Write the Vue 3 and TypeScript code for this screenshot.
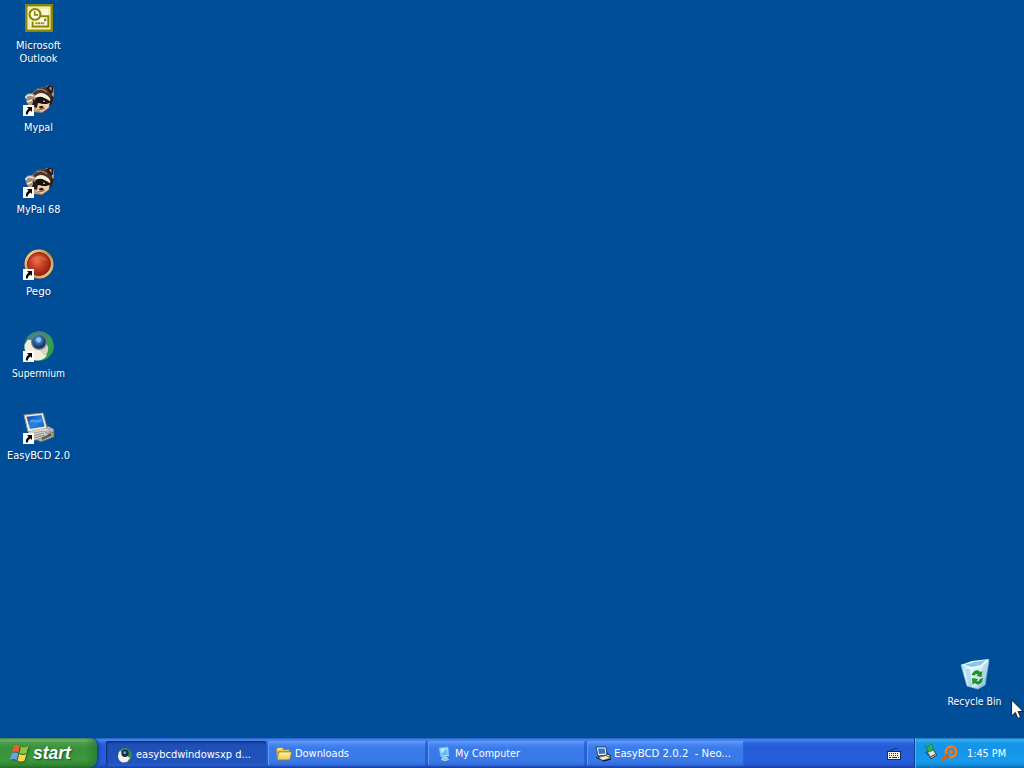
<script setup lang="ts">
interface DesktopItem {
  icon: string
  label: string[]
  width: number
  shortcut: boolean
}
interface TaskItem {
  icon: string
  label: string
  width: number
  active: boolean
}

const items: DesktopItem[] = [
  { icon: 'outlook', label: ['Microsoft', 'Outlook'], width: 45, shortcut: false },
  { icon: 'raccoon', label: ['Mypal'], width: 29, shortcut: true },
  { icon: 'raccoon', label: ['MyPal 68'], width: 44, shortcut: true },
  { icon: 'pego', label: ['Pego'], width: 25, shortcut: true },
  { icon: 'supermium', label: ['Supermium'], width: 53, shortcut: true },
  { icon: 'easybcd', label: ['EasyBCD 2.0'], width: 63, shortcut: true },
]
const lineWidths: Record<string, number> = { Microsoft: 45, Outlook: 38 }

const tasks: TaskItem[] = [
  { icon: 'supermium-small', label: 'easybcdwindowsxp d...', width: 115, active: true },
  { icon: 'folder', label: 'Downloads', width: 54, active: false },
  { icon: 'computer', label: 'My Computer', width: 65, active: false },
  { icon: 'easybcd-small', label: 'EasyBCD 2.0.2\u00a0 - Neo...', width: 117, active: false },
]
</script>

<template>
  <svg class="defs" width="0" height="0" aria-hidden="true">
    <defs>
      <linearGradient id="gFur" x1="0" y1="0" x2="1" y2="1">
        <stop offset="0" stop-color="#8d5c42" /><stop offset=".55" stop-color="#d3a27c" /><stop offset="1" stop-color="#7c4c34" />
      </linearGradient>
      <radialGradient id="gRed" cx=".42" cy=".38" r=".65">
        <stop offset="0" stop-color="#e87450" /><stop offset=".4" stop-color="#cb4426" /><stop offset="1" stop-color="#93200f" />
      </radialGradient>
      <linearGradient id="gRing" x1="0" y1="0" x2="1" y2="1">
        <stop offset="0" stop-color="#f8dca0" /><stop offset=".5" stop-color="#c08d4e" /><stop offset="1" stop-color="#ead49c" />
      </linearGradient>
      <linearGradient id="gGreen" x1="0" y1="0" x2="1" y2="1">
        <stop offset="0" stop-color="#286c68" /><stop offset=".5" stop-color="#3c9a54" /><stop offset="1" stop-color="#23a447" />
      </linearGradient>
      <radialGradient id="gLens" cx=".45" cy=".35" r=".6">
        <stop offset="0" stop-color="#9ccdf5" /><stop offset=".4" stop-color="#3977b9" /><stop offset="1" stop-color="#102c5c" />
      </radialGradient>
      <linearGradient id="gScreen" x1="0" y1="0" x2="1" y2="1">
        <stop offset="0" stop-color="#123fa5" /><stop offset=".55" stop-color="#2586e4" /><stop offset="1" stop-color="#1653bd" />
      </linearGradient>
      <linearGradient id="gBin" x1="0" y1="0" x2="1" y2=".6">
        <stop offset="0" stop-color="#8ccbee" /><stop offset=".35" stop-color="#e7faff" /><stop offset=".75" stop-color="#cfe8f0" /><stop offset="1" stop-color="#8ebbd8" />
      </linearGradient>
      <linearGradient id="gFolder" x1="0" y1="0" x2="0" y2="1">
        <stop offset="0" stop-color="#fff9a6" /><stop offset="1" stop-color="#ecc64a" />
      </linearGradient>
    </defs>
    <symbol id="outlook" viewBox="0 0 32 32">
      <rect x="2" y="2" width="28" height="28" fill="#8b8600" />
      <rect x="4.5" y="4.5" width="23" height="23" fill="#fffde9" />
      <rect x="6" y="6" width="20" height="20" fill="#fffbd0" stroke="#e3dc80" />
      <path d="M17 14.2h8.3v10.3H9.6v-5" fill="#fffdf0" stroke="#8b8600" stroke-width="2" />
      <circle cx="12" cy="12.4" r="5.4" fill="#fffdf0" stroke="#8b8600" stroke-width="2.1" />
      <path d="M11.7 9v3.9h3.5" fill="none" stroke="#8b8600" stroke-width="1.6" />
      <path d="M12.5 21.3h9" stroke="#8b8600" stroke-width="2" stroke-dasharray="2 .6" /><path d="M21 16.6h2.4v2.6H21z" fill="#8b8600" />
    </symbol>
    <symbol id="raccoon" viewBox="0 0 32 32">
      <path d="M9 9L15 4l7-1 4-2 4 1 1 8-1 8-4 6-7 5-8-1-6-7-2-7z" fill="url(#gFur)" />
      <path d="M10 9l6-5 7-1 5 4 2 8-2 6c-3-6-8-9-15-8z" fill="#4b342b" />
      <path d="M23 4l3-3 4 1v6l-2 2z" fill="#241a17" /><path d="M26 4l2.5-1.5V7z" fill="#c49a74" />
      <path d="M14 6c4-2 7-1 10 2" fill="none" stroke="#a78267" stroke-width="1.2" />
      <path d="M11 13c4-5 9-5 14-1l4 5-3 1-6-4z" fill="#f9efe0" />
      <path d="M12 15c4-4 9-2 16 3l-2 4-6-1-7-2z" fill="#14110f" />
      <path d="M15 19c5 1 9 2 13-1l-3 6-6 4-6-2z" fill="#f1cfac" />
      <path d="M28 12l3 1-2 7-3 3z" fill="#2c1d18" />
      <path d="M10 15l5 3-1 6-5-2z" fill="#241c1a" />
      <path d="M16 22.5l3-.7 2 1.2-2 1.8-2.6-.5z" fill="#2b1915" />
      <path d="M14 26l5-.5 3-1.5" fill="none" stroke="#915c3e" />
      <path d="M2 13c1-4 6-5 10-2l-2 3c-3-2-4-1-5 2l5-1v4H4z" fill="#9d9084" />
      <path d="M2.5 14c1-3 4-4 8-2M4 18l5-2" fill="none" stroke="#f3eadf" stroke-width="1.5" />
      <circle cx="21" cy="17.2" r=".8" fill="#fff" />
    </symbol>
    <symbol id="pego" viewBox="0 0 32 32">
      <circle cx="16" cy="16" r="14.8" fill="#794334" />
      <circle cx="16" cy="16" r="13" fill="none" stroke="url(#gRing)" stroke-width="2.8" />
      <circle cx="16" cy="16" r="11.4" fill="url(#gRed)" stroke="#8a2b18" />
      <path d="M7 13c5-7 13-7 18 0-5-2-12-2-18 0z" fill="#f19875" opacity=".3" />
    </symbol>
    <symbol id="supermium" viewBox="0 0 32 32">
      <circle cx="16" cy="16" r="14.8" fill="url(#gGreen)" />
      <path d="M4 8C8 2 16 0 23 3l-5 4-6 3-4 3z" fill="#3c8783" />
      <path d="M1.5 15l3-5c4-1 7 2 10 6l8 3 1 7c-4 5-9 5-13 4C5 27 1 22 1.5 15z" fill="#f2eddf" />
      <path d="M7 11l5-5 2 11z" fill="#d4dedb" />
      <path d="M23 13c3 4 3 9-1 13l-7-7z" fill="#ded4c3" />
      <circle cx="16" cy="12" r="8" fill="#6a7f89" /><circle cx="16" cy="11.7" r="6.8" fill="url(#gLens)" />
      <circle cx="15.7" cy="10" r="2.4" fill="#8fc5ee" />
    </symbol>
    <symbol id="supermium-small" viewBox="0 0 16 16">
      <circle cx="8" cy="8" r="7" fill="#35884c" />
      <path d="M1 9l1-4 4-3 3 6 4 3-3 4-4 .5C3 15 1 12 1 9z" fill="#f4f1e8" />
      <path d="M2 4l3-2 5-1-3 4z" fill="#4b898a" /><circle cx="8" cy="6.2" r="3.7" fill="#172e51" /><circle cx="7.8" cy="5.7" r="1.4" fill="#70a7d8" />
    </symbol>
    <symbol id="easybcd" viewBox="0 0 32 32">
      <path d="M10 21l15-7 6 3v8l-13 5-9-4z" fill="#aeada0" stroke="#45545d" stroke-width=".8" />
      <path d="M13 21l13-6 4 3-11 6z" fill="#e5dfce" /><path d="M19 25l11-5v3l-11 5z" fill="#54595b" />
      <ellipse cx="24.5" cy="18.3" rx="3.7" ry="2.1" fill="#bab6d8" stroke="#777993" stroke-width=".6" />
      <path d="M28 21h2v2h-2z" fill="#c6a638" />
      <path d="M1 3L20 1l4 15L5 20z" fill="#f3eedf" stroke="#8f9490" />
      <path d="M3.5 4.7l15.1-1.6 3 11.4L7 17z" fill="url(#gScreen)" />
      <path d="M7 8c5-2 7 2 11-1l1 2c-5 3-8 0-12 2z" fill="#6bb5f2" opacity=".6" />
      <path d="M5 20l18-4 2 2-16 5z" fill="#ddd7c8" />
      <path d="M6 22l15-3 4 4-15 6z" fill="#d4d3ca" stroke="#737d80" stroke-width=".6" />
      <path d="M10 24l11-3M11 26l11-3" stroke="#727674" stroke-width=".8" />
    </symbol>
    <symbol id="easybcd-small" viewBox="0 0 16 16">
      <path d="M4 9l8-2 4 3v3l-7 2-5-2z" fill="#807f7a" stroke="#111924" stroke-width=".8" />
      <path d="M1 1h10l1 8-9 1z" fill="#fffbed" stroke="#14223c" stroke-width=".8" />
      <path d="M3 2.5h6.7l.7 5L4 8z" fill="#2477d8" />
      <path d="M4 12l7-2 3 2-6 2z" fill="#f2eee0" /><path d="M1 11l3 2M8 15l8-2" stroke="#10151d" />
      <path d="M12 9h2v1h-2z" fill="#e1c7bd" />
    </symbol>
    <symbol id="arrow" viewBox="0 0 11 11">
      <path d="M0 0h11v11H0z" fill="#fff" />
      <path d="M4 2h5v5L7.4 5.5C5.3 7 4.8 8 4.8 9.5H3C2.7 7 3.4 5.3 5.6 3.8z" fill="#000" />
    </symbol>
    <symbol id="bin" viewBox="0 0 32 32">
      <path d="M2 7L30 2l-4 25-7 4-11-3z" fill="url(#gBin)" stroke="#80bdde" stroke-width=".8" />
      <path d="M2 7l11-4 17-2-6 7-11 2z" fill="#f2ffff" />
      <path d="M5 7l10-3 12-2-5 5-9 2z" fill="#86c6e8" />
      <path d="M6 11l3 16 4 2-2-18z" fill="#8ac4e5" opacity=".5" />
      <path d="M24 7l5-3-4 21-3 2z" fill="#a8d1e5" opacity=".6" />
      <path d="M12.5 17c2-5 6-6 9-3l2-1-1 6-5-1 1.5-1.5c-1.2-1-2.7-.5-3.5 1zM24 20l-1 4c-2 3-5 3-7.5 1l-2 2-.5-7 6 1-1.5 2c1.5.7 3 0 3.3-2z" fill="#239329" />
    </symbol>
    <symbol id="folder" viewBox="0 0 16 16">
      <path d="M.5 3.5l1-2h5l1 2h6v2H.5z" fill="#f7df70" stroke="#927923" stroke-width=".7" />
      <path d="M.5 4.5h13v9H1z" fill="#dca72f" />
      <path d="M3 6h12.7l-2 8H1z" fill="url(#gFolder)" stroke="#987629" stroke-width=".7" />
    </symbol>
    <symbol id="computer" viewBox="0 0 16 16">
      <path d="M3 2l9-1 1 9-8 1z" fill="#ace4fa" stroke="#67b3ea" stroke-width=".7" />
      <path d="M4.3 3.2l6.7-.8.6 6.3-6 .7z" fill="#64b9f3" />
      <path d="M4.4 3.2l6.4-.7-5.2 5z" fill="#b7eafb" />
      <path d="M7 11h4l2 3-4 1-4-1z" fill="#c4e3e7" /><path d="M7 13h5" stroke="#6da4be" />
    </symbol>
  </svg>

  <div class="screen">
    <main class="desktop">
      <div class="column">
        <div v-for="item in items" :key="item.label.join(' ')" class="item">
          <div class="picture">
            <svg class="large"><use :href="'#' + item.icon" /></svg>
            <svg v-if="item.shortcut" class="shortcut"><use href="#arrow" /></svg>
          </div>
          <svg v-for="line in item.label" :key="line" class="line" width="76" height="13">
            <text x="38.5" y="10" text-anchor="middle" :textLength="lineWidths[line] ?? item.width" lengthAdjust="spacingAndGlyphs">{{ line }}</text>
          </svg>
        </div>
      </div>
      <div class="item recycle">
        <div class="picture"><svg class="large"><use href="#bin" /></svg></div>
        <svg class="line" width="76" height="13">
          <text x="38.5" y="10" text-anchor="middle" textLength="54" lengthAdjust="spacingAndGlyphs">Recycle Bin</text>
        </svg>
      </div>
    </main>

    <footer class="taskbar">
      <button class="start">
        <svg class="flag" viewBox="0 0 20 20">
          <path d="M3.7 2.8C6 1.1 8 1.6 10 2.8L8.5 9.5C6.5 8.3 4.5 8.1 2 9.5z" fill="#ef5c2d" />
          <path d="M11 3.4c2.5 1.4 4.7 1.2 7.4-.1L16.6 10c-2.5 1.3-4.9 1-7.1-.1z" fill="#8cc63c" />
          <path d="M1.7 10.6c2.5-1.4 4.5-1.2 6.5-.1L6.6 17.1C4.6 15.8 2.5 15.8 0 17z" fill="#65a2ef" />
          <path d="M9.2 11.1c2.2 1.1 4.7 1.3 7.1.1l-1.8 6.5c-2.4 1.2-4.7.8-6.9-.2z" fill="#ffd247" />
        </svg>
        <span>start</span>
      </button>
      <div class="tasks">
        <button v-for="task in tasks" :key="task.label" class="task" :class="{ active: task.active }">
          <svg class="small"><use :href="'#' + task.icon" /></svg>
          <svg class="caption" width="122" height="15">
            <text x="0" y="11" :textLength="task.width" lengthAdjust="spacingAndGlyphs">{{ task.label }}</text>
          </svg>
        </button>
      </div>
      <svg class="keyboard" viewBox="0 0 14 12">
        <path d="M3 3c0-2 3 0 4-2s3 0 4-1" fill="none" stroke="#193568" />
        <rect x=".5" y="3.5" width="13" height="8" fill="#f4f2e9" stroke="#172d54" />
        <path d="M2 5.5h10M2 7.5h10" stroke="#26313f" stroke-dasharray="1 1" /><path d="M2 9.5h2m1 0h5m1 0h1" stroke="#26313f" />
      </svg>
      <div class="tray">
        <svg class="device" viewBox="0 0 16 16">
          <path d="M4 8l6-3 4 6-6 4z" fill="#a9bab5" stroke="#29485e" />
          <path d="M6 9l4-2 2 3-4 2z" fill="#e9ebdf" /><path d="M7.5 13l5-3" stroke="#304a4b" />
          <path d="M1 2l4 1 3-3 2 1-1 6H3l2-2z" fill="#2bb54a" stroke="#14784b" stroke-width=".6" />
          <path d="M2 8l3 3" stroke="#254d65" />
        </svg>
        <svg class="search" viewBox="0 0 17 17">
          <circle cx="10" cy="6.8" r="5.2" fill="none" stroke="#ee7b22" stroke-width="2.8" />
          <circle cx="10" cy="6.8" r="2" fill="#ee7418" />
          <path d="M5.8 10.8L2.2 14.3" stroke="#df5e16" stroke-width="3.4" stroke-linecap="round" />
          <path d="M4.8 9l3.5 3.5" stroke="#9d4c24" />
        </svg>
        <svg class="clock" width="42" height="15"><text x="0" y="11" textLength="39" lengthAdjust="spacingAndGlyphs">1:45 PM</text></svg>
      </div>
    </footer>

    <svg class="pointer" viewBox="0 0 13 21">
      <path d="M.6 1v16l3.7-3.6 2.5 6 2.8-1.2-2.5-5.7h5z" fill="#fff" stroke="#111" stroke-width=".9" />
    </svg>
  </div>
</template>

<style>
html, body { margin: 0; overflow: hidden; background: #004e98; }
</style>

<style scoped>
.defs { position: absolute; }
.screen { position: relative; display: flex; flex-direction: column; width: 1024px; height: 768px; overflow: hidden; background: #004e98; font-family: "DejaVu Sans Condensed", "DejaVu Sans", sans-serif; font-size: 11px; }
.desktop { flex: 1; display: flex; justify-content: space-between; min-height: 0; }
.column { display: flex; flex-direction: column; padding-top: 2px; }
.item { display: flex; flex-direction: column; align-items: center; width: 76px; height: 82px; }
.recycle { align-self: flex-end; height: 80px; margin-right: 12px; }
.picture { position: relative; width: 32px; height: 32px; margin: 0 0 5px 1px; }
.large { display: block; width: 32px; height: 32px; }
.shortcut { position: absolute; left: 0; bottom: 0; width: 11px; height: 11px; }
.line, .caption, .clock { display: block; flex: none; overflow: visible; fill: #fff; }
.line { text-shadow: 1px 1px 1px #00387a; }
.taskbar { display: flex; height: 30px; background: linear-gradient(#1d4cae 0, #3b7ee7 1px, #4388f4 2px, #2b65dc 5px, #245bd5 9px, #255ddc 24px, #2154ca 27px, #1941a5 30px); }
button { border: 0; margin: 0; padding: 0; font: inherit; color: #fff; }
.start { display: flex; align-items: center; box-sizing: border-box; width: 97px; height: 30px; padding-left: 10px; gap: 3px; border-radius: 0 8px 9px 0; background: linear-gradient(90deg, transparent 88%, #226f2b99 100%), linear-gradient(#317f42 0, #70b170 2px, #479c48 5px, #3a923b 10px, #3b983b 22px, #328634 27px, #226a29 30px); box-shadow: 2px 0 3px #173f9c; }
.flag { width: 20px; height: 20px; filter: drop-shadow(1px 1px 1px #205d25); }
.start span { font: italic bold 17.5px/22px "Liberation Sans", sans-serif; text-shadow: 1px 1px 2px #184c20; }
.tasks { display: flex; gap: 2px; margin-left: 9px; padding-top: 3px; width: 638px; height: 25px; }
.task { display: flex; align-items: center; flex: 1; gap: 3px; min-width: 0; padding-left: 8px; border-radius: 2px; background: linear-gradient(#6a9df5 0, #4b88f1 3px, #397bea 7px, #3979e8 20px, #2f68d5 25px); box-shadow: inset 1px 1px #669af3, inset -1px -1px #2b65d2; }
.task.active { padding: 2px 0 0 11px; background: linear-gradient(#173e92, #1e50b7 4px, #2053bd 22px, #2861ca); box-shadow: inset 1px 1px 2px #102e73; }
.small { width: 16px; height: 16px; flex: none; }
.keyboard { align-self: center; width: 14px; height: 12px; margin: 1px 1px 0 auto; }
.tray { display: flex; align-items: center; box-sizing: border-box; width: 110px; height: 30px; margin-left: 12px; padding: 1px 0 0 8px; border-left: 1px solid #0d4491; background: linear-gradient(#1e6eb9 0, #34b3f3 2px, #1998e9 5px, #1394e8 10px, #179bed 23px, #158bda 27px, #1267af 30px); box-shadow: inset 1px 0 #36c0f7; }
.device { width: 16px; height: 16px; margin-bottom: 3px; }
.search { width: 17px; height: 17px; margin: 0 0 1px 2px; }
.clock { margin-left: 9px; }
.pointer { position: absolute; left: 1011px; top: 699px; width: 13px; height: 21px; }
</style>
